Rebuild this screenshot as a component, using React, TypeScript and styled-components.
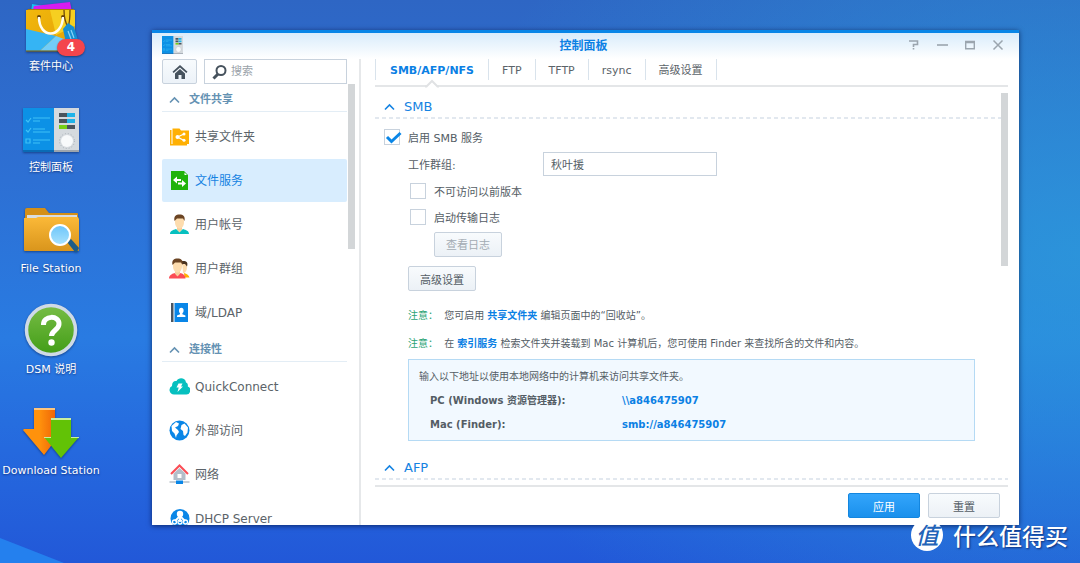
import React from "react";
import styled, { createGlobalStyle } from "styled-components";

const GlobalStyle = createGlobalStyle`
  * { box-sizing: border-box; }
  html, body, #root { height: 100%; }
  body {
    margin: 0;
    overflow: hidden;
    font-family: "DejaVu Sans", "Noto Sans CJK SC", sans-serif;
    font-size: 11px;
    color: #545d65;
  }
  a { color: inherit; text-decoration: none; }
  button, input { font: inherit; color: inherit; }
`;

const Desktop = styled.div`
  position: relative;
  min-height: 100%;
  height: 100vh;
  overflow: hidden;
  background:
    radial-gradient(ellipse 60% 85% at 100% 45%, rgba(44, 160, 218, 0.7), rgba(44, 160, 218, 0) 100%),
    linear-gradient(180deg, #2e66c4 0%, #2d70d4 32%, #297be2 60%, #2569de 80%, #2258d8 100%);
  &::after {
    content: "";
    position: absolute;
    left: 0;
    bottom: 0;
    width: 64px;
    height: 25px;
    background: #2480ee;
    clip-path: polygon(0 0, 100% 100%, 0 100%);
  }
`;

const Shortcuts = styled.nav`
  display: flex;
  flex-direction: column;
  width: 102px;
`;

const Shortcut = styled.a`
  display: flex;
  flex-direction: column;
  align-items: center;
  height: 101px;
  color: #fff;
  line-height: 16px;
  white-space: nowrap;
  text-shadow: 0 1px 2px rgba(0, 20, 80, 0.6);
`;

const ShortcutIcon = styled.span`
  position: relative;
  height: 59px;
  svg { display: block; filter: drop-shadow(0 1px 1px rgba(0, 20, 70, 0.5)); }
`;

const Badge = styled.span`
  position: absolute;
  right: -3px;
  top: 39px;
  width: 28px;
  height: 17px;
  border-radius: 9px;
  background: #f4454c;
  box-shadow: 0 1px 2px rgba(0, 0, 0, 0.4);
  font-size: 12px;
  font-weight: bold;
  line-height: 17px;
  text-align: center;
  text-shadow: none;
`;

const Window = styled.section`
  position: absolute;
  top: 30px;
  right: 61px;
  bottom: 38px;
  left: 152px;
  display: flex;
  flex-direction: column;
  border-top: 3px solid #0986e7;
  background: #fff;
  box-shadow: 0 1px 5px rgba(0, 15, 60, 0.7);
`;

const TitleBar = styled.header`
  display: grid;
  grid-template-columns: 1fr auto 1fr;
  align-items: center;
  flex: none;
  height: 26px;
  padding: 0 14px 0 10px;
  background: linear-gradient(#d9ecfb, #fff);
  svg { display: block; }
  > svg { margin-bottom: 2px; }
`;

const Title = styled.h1`
  margin: 0;
  font-size: 12px;
  line-height: 24px;
  color: #0b80e4;
`;

const WindowControls = styled.div`
  display: flex;
  justify-content: flex-end;
  gap: 14px;
  padding-bottom: 2px;
`;

const ControlButton = styled.button`
  width: 14px;
  height: 14px;
  padding: 0;
  border: 0;
  background: none;
  color: #9ba5ae;
`;

const Body = styled.div`
  display: flex;
  flex: 1;
  min-height: 0;
`;

const Sidebar = styled.aside`
  display: flex;
  flex-direction: column;
  flex: none;
  width: 209px;
  border-right: 2px solid #e6e8ea;
`;

const SearchRow = styled.div`
  display: flex;
  gap: 7px;
  flex: none;
  padding: 0 12px 0 10px;
`;

const HomeButton = styled.button`
  display: grid;
  place-items: center;
  width: 35px;
  height: 25px;
  padding: 0;
  border: 1px solid #c8d2dd;
  border-radius: 2px;
  background: linear-gradient(#f8fbfd, #ecf2f8);
  color: #46525d;
`;

const SearchBox = styled.label`
  display: flex;
  align-items: center;
  gap: 4px;
  width: 143px;
  height: 25px;
  padding-left: 7px;
  border: 1px solid #c8d2dd;
  color: #46525d;
  svg { flex: none; }
`;

const SearchInput = styled.input`
  width: 100%;
  min-width: 0;
  padding: 0;
  border: 0;
  outline: 0;
  background: none;
  &::placeholder { color: #9aa2a9; opacity: 1; }
`;

const SideScroll = styled.div`
  display: flex;
  align-items: flex-start;
  flex: 1;
  min-height: 0;
  overflow: hidden;
  padding-left: 10px;
`;

const SideNav = styled.nav`
  width: 185px;
  padding-top: 1px;
`;

const ScrollThumb = styled.div<{ $height: number }>`
  width: 7px;
  height: ${(p) => p.$height}px;
  margin-left: 1px;
  background: #d3d6d8;
`;

const NavGroup = styled.h2`
  display: flex;
  align-items: center;
  gap: 9px;
  height: 27px;
  margin: 0 0 3px;
  padding: 3px 0 0 7px;
  border-bottom: 1px solid #e3edf5;
  font-size: 11px;
  line-height: 22px;
  color: #6592b3;
`;

const NavItem = styled.a<{ $active?: boolean }>`
  display: flex;
  align-items: center;
  gap: 5px;
  height: 43px;
  margin-bottom: 1px;
  padding-left: 7px;
  border-radius: 2px;
  font-size: 12px;
  line-height: 20px;
  white-space: nowrap;
  background: ${(p) => (p.$active ? "#d8edfe" : "transparent")};
  color: ${(p) => (p.$active ? "#1583e2" : "#5b6369")};
`;

const Main = styled.main`
  display: flex;
  flex-direction: column;
  flex: 1;
  min-width: 0;
  padding: 0 11px 0 14px;
`;

const Tabs = styled.nav`
  display: flex;
  flex: none;
  height: 28px;
  border-bottom: 2px solid #e4e6e8;
`;

const Tab = styled.a<{ $active?: boolean }>`
  position: relative;
  height: 21px;
  padding: 0 ${(p) => (p.$active ? 14 : 13)}px;
  border-right: 1px solid #d9e3ec;
  line-height: 23px;
  white-space: nowrap;
  font-weight: ${(p) => (p.$active ? "bold" : "normal")};
  color: ${(p) => (p.$active ? "#0b80e4" : "#5b6369")};
  &:first-child { border-left: 1px solid #d9e3ec; }
`;

const Notch = styled.svg`
  position: absolute;
  left: 50%;
  top: 20px;
  margin-left: -7px;
`;

const Content = styled.div`
  position: relative;
  flex: 1;
  min-height: 0;
  overflow: hidden;
  padding-top: 6px;
`;

const ContentScroll = styled.div`
  position: absolute;
  top: 6px;
  right: 0;
`;

const SectionTitle = styled.h2`
  display: flex;
  align-items: center;
  gap: 9px;
  height: 26px;
  margin: 0;
  padding: 1px 0 0 9px;
  background: repeating-linear-gradient(90deg, #e2e8ef 0 4px, transparent 4px 7px) bottom / 100% 2px no-repeat;
  font-size: 13px;
  font-weight: normal;
  line-height: 24px;
  color: #1583e2;
`;

const Form = styled.form`
  padding: 5px 33px 13px;
`;

const FormRow = styled.div<{ $height?: number; $indent?: number }>`
  display: flex;
  align-items: center;
  height: ${(p) => p.$height ?? 26}px;
  padding-left: ${(p) => p.$indent ?? 0}px;
`;

const FieldLabel = styled.label`
  width: 135px;
`;

const TextInput = styled.input`
  width: 174px;
  height: 24px;
  padding: 0 7px;
  border: 1px solid #c8d2dd;
  outline: 0;
`;

const CheckLabel = styled.label<{ $outdent?: boolean }>`
  position: relative;
  display: flex;
  align-items: center;
  gap: 8px;
  margin-left: ${(p) => (p.$outdent ? -24 : 2)}px;
  svg { position: absolute; left: 1px; top: 2px; }
`;

const CheckBox = styled.input.attrs({ type: "checkbox" })`
  appearance: none;
  width: 16px;
  height: 16px;
  margin: 0;
  border: 1px solid #c8d2dd;
  background: #fff;
`;

const Button = styled.button<{ $primary?: boolean; $wide?: boolean }>`
  width: ${(p) => (p.$wide ? 72 : 68)}px;
  height: 25px;
  padding: 0;
  border: 1px solid ${(p) => (p.$primary ? "#1386df" : "#c8d2dd")};
  border-radius: 2px;
  background: ${(p) => (p.$primary ? "linear-gradient(#33a5fb, #1a90ec)" : "linear-gradient(#f8fbfd, #ecf1f6)")};
  color: ${(p) => (p.$primary ? "#fff" : "#545d65")};
  &:disabled { color: #a3abb3; }
`;

const Notes = styled.div`
  padding: 3px 0 1px;
`;

const Note = styled.p`
  margin: 0;
  font-size: 10px;
  line-height: 28px;
  white-space: nowrap;
  a { font-weight: bold; color: #0b80e4; }
`;

const NoteTag = styled.span`
  margin-right: 3px;
  color: #29a374;
`;

const AddressBox = styled.div`
  padding: 5px 10px 3px;
  border: 1px solid #b5daf4;
  background: #f2f9ff;
  font-size: 10px;
  line-height: 24px;
  p, dl, dd { margin: 0; }
`;

const AddressList = styled.dl`
  display: grid;
  grid-template-columns: 192px 1fr;
  padding-left: 11px;
  font-weight: bold;
  a { color: #0b80e4; }
`;

const Footer = styled.footer`
  display: flex;
  justify-content: flex-end;
  gap: 8px;
  flex: none;
  height: 40px;
  padding: 6px 8px 0;
  border-top: 2px solid #e4e6e8;
`;

const Watermark = styled.div`
  position: absolute;
  right: 12px;
  bottom: 11px;
  display: flex;
  align-items: center;
  gap: 10px;
  color: #fff;
  font-family: "Noto Sans CJK SC", sans-serif;
  font-size: 23px;
  font-weight: 500;
  line-height: 34px;
  text-shadow: 1px 1px 2px rgba(0, 20, 80, 0.7);
`;

const Seal = styled.span`
  width: 32px;
  height: 32px;
  border-radius: 50%;
  background: #fff;
  color: #2263b8;
  font-style: italic;
  line-height: 31px;
  text-align: center;
  text-shadow: none;
`;

const Chevron = () => (
  <svg width="11" height="8" viewBox="0 0 11 8" fill="none" stroke="currentColor" strokeWidth="1.6">
    <path d="M1 6.5 5.5 2 10 6.5" />
  </svg>
);

const PanelArt = () => (
  <>
    <rect x="0" y="0" width="31" height="43" fill="#0c91e6" />
    <rect x="31" y="0" width="25" height="43" fill="#d5dade" />
    <path d="M0 42h31v2H0z" fill="#0a6bb5" />
    <path d="M31 42h25v2H31z" fill="#9da5ad" />
    <path d="M3 12l2 2 3-4M3 22l2 2 3-4M3 31h4v4H3zM10 10h17M10 13h7M10 21h12M10 24h17M10 32h17M10 35h7" stroke="#3fc1f6" strokeWidth="1.2" fill="none" />
    <path d="M36 5h8v4h-8zM36 11h8v4h-8zM44 17h8v4h-8z" fill="#4a545c" />
    <path d="M44 5h8v4h-8zM44 11h8v4h-8z" fill="#1fb3e8" />
    <path d="M36 17h8v4h-8z" fill="#76d016" />
    <circle cx="44" cy="33" r="7.5" fill="none" stroke="#a9b1b8" strokeWidth="1" strokeDasharray="1 2" />
    <circle cx="44" cy="33" r="6" fill="#f8fafb" />
  </>
);

const PackageIcon = () => (
  <svg width="62" height="58" viewBox="0 0 62 58">
    <defs>
      <linearGradient id="bag" x1="0" y1="0" x2="1" y2="1">
        <stop offset="0" stopColor="#f2b80c" /><stop offset="1" stopColor="#e3a006" />
      </linearGradient>
    </defs>
    <path d="M12 4 42 9 40 13 11 12z" fill="#19c3f0" />
    <path d="M14 6 50 2 52 12 12 12z" fill="#d61bf0" />
    <path d="M8 9h46l1 3H6z" fill="#b07a06" />
    <path d="M6 10h49v41H6z" fill="url(#bag)" />
    <path d="M30 10h25v16L36 35z" fill="#f6cf21" />
    <path d="M6 29 36 36 20 51H6z" fill="#35b4f4" />
    <path d="M20 51 36 36 55 43v8z" fill="#72cdf8" />
    <path d="M6 50h49v2H6z" fill="#7b6a20" opacity=".6" />
    <circle cx="19" cy="17" r="2" fill="#6a4605" /><circle cx="43" cy="17" r="2" fill="#6a4605" />
    <path d="M19 17c0 22 23 22 24 0" fill="none" stroke="#fffdf0" strokeWidth="2.5" />
    <path d="M44 10c0 8 1 12 4 17M50 10c0 8 0 12-2 17" fill="none" stroke="#6e4a0c" strokeWidth="1.3" />
    <path d="M43 29 48 23 54 27 58 40 46 43z" fill="#168fd2" />
    <path d="M48 31l3 8M51 30l3 8" stroke="#8ad4f7" strokeWidth="1.2" />
  </svg>
);

const PanelIcon = () => (
  <svg width="62" height="58" viewBox="0 0 62 58"><g transform="translate(3 7)"><PanelArt /></g></svg>
);

const FolderIcon = () => (
  <svg width="62" height="58" viewBox="0 0 62 58">
    <defs>
      <linearGradient id="folder" x1="0" y1="0" x2="0" y2="1">
        <stop offset="0" stopColor="#fbb938" /><stop offset="1" stopColor="#d9951c" />
      </linearGradient>
      <linearGradient id="lens" x1="0" y1="0" x2="0" y2="1">
        <stop offset="0" stopColor="#6cc5fa" /><stop offset="1" stopColor="#a9e3fd" />
      </linearGradient>
    </defs>
    <path d="M5 8q0-2 2-2h18l4 5h28q1 0 1 1v10H5z" fill="#d48f17" />
    <path d="M7 13h50v5H7z" fill="#d9dde0" />
    <path d="M4 16h12l2-1h40l1 2v31q0 1-1 1H5q-1 0-1-1z" fill="url(#folder)" />
    <path d="M47 40l4-3 8 9-2 4h-2z" fill="#1d5d88" />
    <circle cx="40" cy="33" r="10" fill="url(#lens)" stroke="#fff" strokeWidth="2" />
  </svg>
);

const HelpIcon = () => (
  <svg width="62" height="58" viewBox="0 0 62 58">
    <defs>
      <linearGradient id="help" x1="0" y1="0" x2="0" y2="1">
        <stop offset="0" stopColor="#78bd46" /><stop offset="1" stopColor="#429d17" />
      </linearGradient>
    </defs>
    <circle cx="31" cy="27" r="24.5" fill="url(#help)" stroke="#cfdae6" strokeWidth="3.5" />
    <path d="M23.5 22c-.5-10 16-10 15.500-1 0 6-7.500 6.500-7.500 12" fill="none" stroke="#fff" strokeWidth="5" />
    <circle cx="31.500" cy="39.500" r="3.200" fill="#fff" />
  </svg>
);

const DownloadIcon = () => (
  <svg width="62" height="58" viewBox="0 0 62 58">
    <defs>
      <linearGradient id="orange" x1="0" y1="0" x2="1" y2="0">
        <stop offset="0.400" stopColor="#ff920c" /><stop offset="1" stopColor="#e64d05" />
      </linearGradient>
    </defs>
    <path d="M14 4h21v21h9L24 51 3 26l1-1h10z" fill="url(#orange)" />
    <path d="M14 4h21v2H14z" fill="#ffc67d" />
    <path d="M31 14h20v19h8L41 54 24 33h7z" fill="#62c206" />
    <path d="M31 14h20v2H31zM24 33h7v1h-7zM51 33h8v1h-8z" fill="#c9ef9f" />
  </svg>
);

const navSvg = { width: 21, height: 21, viewBox: "0 0 21 21" };

const SharedFolderGlyph = () => (
  <svg {...navSvg}>
    <path d="M1 4h1.500v14H18v1.500H1zM3.500 2.500h7l1.500 2h8v13.500H3.500z" fill="#ffb003" />
    <path d="M15 8 8.500 11l6.500 3.500" stroke="#fff" strokeWidth="1.200" fill="none" />
    <g fill="#fff"><circle cx="15" cy="8" r="1.500" /><circle cx="8.500" cy="11" r="2" /><circle cx="15" cy="14.300" r="1.500" /></g>
  </svg>
);
const FileServiceGlyph = () => (
  <svg {...navSvg}>
    <path d="M2 1h13l4 4v15H2z" fill="#1fb30b" />
    <path d="M15.500 2.500v2.500H18z" fill="#fff" />
    <path d="M8 6.500v2.500h4v2H8v2.500L4 10zM13 10l4 3.500-4 3.500v-2.500H9v-2h4z" fill="#fff" />
  </svg>
);
const UserGlyph = () => (
  <svg {...navSvg}>
    <path d="M1 20c0-3 3-4 6-5l3.500 3 3.500-3c3 1 6 2 6 5z" fill="#06c0bf" />
    <path d="M8 12h5v3.500l-2.500 3-2.500-3z" fill="#f6cf9a" />
    <path d="M6 4h9v4c0 4-2 6.500-4.500 6.500S6 12 6 8z" fill="#fddcae" />
    <path d="M5.500 7C4.500 2 7 .5 10.500 .5S16.500 2 15.500 7L14 4.500H8z" fill="#6b4423" />
  </svg>
);
const GroupGlyph = () => (
  <svg {...navSvg}>
    <path d="M15 15c3 1 5 2 5.500 4.500h-5z" fill="#ffb003" />
    <path d="M13 4h5v5c0 4-2 6-4 6z" fill="#fddcae" />
    <path d="M13 3c4-.5 6.500 1 5 5.500L16 6h-3z" fill="#4a3320" />
    <path d="M0 20.500c0-3 2.500-4.500 5.500-5.500l3 3 3-3c3 1 5 2.500 5 5.500z" fill="#fb4d55" />
    <path d="M6 12h5v3.500l-2.500 3-2.500-3z" fill="#f6cf9a" />
    <path d="M4 4h9v4c0 4-2 6.500-4.500 6.500S4 12 4 8z" fill="#fddcae" />
    <path d="M3.500 7C2.500 2 5 .5 8.500 .5S14.500 2 13.500 7L12 4.500H6z" fill="#6b4423" />
  </svg>
);
const LdapGlyph = () => (
  <svg {...navSvg}>
    <path d="M2 1h2.500v19H2z" fill="#4a5560" />
    <path d="M5.500 1H19v19H5.500z" fill="#0986e7" />
    <path d="M10 8.500a2.300 2.700 0 1 1 4.600 0c0 1.300-.6 2.300-1.200 2.800v1l3 1.200V15H8v-1.500l3-1.200v-1c-.6-.5-1-1.500-1-2.800z" fill="#fff" />
  </svg>
);
const CloudGlyph = () => (
  <svg {...navSvg}>
    <path d="M5 18.500a4.500 4.500 0 0 1-2-8.500C3 6 5 4.500 7.500 5c2-4 9-3.500 9.500 1.500 2 1 2 2.500 1.800 4a4.200 4.200 0 0 1-2.300 8z" fill="#06c0bf" />
    <path d="M9.500 7.500h4L12 10.500h2L8.500 16l1.200-4.500H7.500z" fill="#fff" />
  </svg>
);
const GlobeGlyph = () => (
  <svg {...navSvg}>
    <circle cx="10.500" cy="10.500" r="10" fill="#0986e7" />
    <path d="M2.500 6 7 2l3 1.500-1 2.500-3 1.500 3 2.500 1 2-2.500 3.500L7 18l-1.500-4.500L3 11zM12.500 5l3-1.500 3.500 4-.5 5L16 16l-1.500-1-.5-4-2.500-2z" fill="#fff" />
  </svg>
);
const NetworkGlyph = () => (
  <svg {...navSvg}>
    <path d="M4.500 9.500l6-5.500 6 5.500V16h-12z" fill="#b3bec9" />
    <path d="M8.500 10h4v4h-4z" fill="#fff" />
    <path d="M2 10 10.500 1.500 19 10" stroke="#fb4d55" strokeWidth="2" fill="none" />
    <path d="M.5 18h20" stroke="#a5b1bd" strokeWidth="1.200" />
    <path d="M7 16.500h7v3.500H7z" fill="#0986e7" />
  </svg>
);
const DhcpGlyph = () => (
  <svg {...navSvg}>
    <circle cx="11" cy="10.500" r="9.500" fill="#0986e7" />
    <circle cx="11" cy="6" r="3.200" fill="#fff" />
    <path d="M11 6v8M11 8l-5 5M11 8l5 5" stroke="#fff" strokeWidth="1.800" />
    <g fill="none" stroke="#fff" strokeWidth="1.300"><circle cx="5.500" cy="14" r="2" /><circle cx="11" cy="14" r="2" /><circle cx="16.500" cy="14" r="2" /></g>
  </svg>
);

const shortcuts = [
  { label: "套件中心", Icon: PackageIcon, badge: "4" },
  { label: "控制面板", Icon: PanelIcon },
  { label: "File Station", Icon: FolderIcon },
  { label: "DSM 说明", Icon: HelpIcon },
  { label: "Download Station", Icon: DownloadIcon },
];

const groups = [
  {
    title: "文件共享",
    items: [
      { label: "共享文件夹", Icon: SharedFolderGlyph },
      { label: "文件服务", Icon: FileServiceGlyph, active: true },
      { label: "用户帐号", Icon: UserGlyph },
      { label: "用户群组", Icon: GroupGlyph },
      { label: "域/LDAP", Icon: LdapGlyph },
    ],
  },
  {
    title: "连接性",
    items: [
      { label: "QuickConnect", Icon: CloudGlyph },
      { label: "外部访问", Icon: GlobeGlyph },
      { label: "网络", Icon: NetworkGlyph },
      { label: "DHCP Server", Icon: DhcpGlyph },
    ],
  },
];

const controls = [
  { label: "帮助", art: <path d="M2 3h8.500v3.500H6.500V9M6.500 10v1.500" strokeWidth="1.600" /> },
  { label: "最小化", art: <path d="M2 7h11" strokeWidth="1.600" /> },
  { label: "最大化", art: <path d="M2.700 3.500h8.600v7.300H2.700zM2 3.500h10M2 4.500h10" strokeWidth="1.400" /> },
  { label: "关闭", art: <path d="M2.500 2.500l9 9M11.500 2.500l-9 9" strokeWidth="1.500" /> },
];

const tabs = ["SMB/AFP/NFS", "FTP", "TFTP", "rsync", "高级设置"];

export default function App() {
  return (
    <>
      <GlobalStyle />
      <Desktop lang="zh-CN">
        <Shortcuts>
          {shortcuts.map(({ label, Icon, badge }) => (
            <Shortcut href="#" key={label}>
              <ShortcutIcon>
                <Icon />
                {badge && <Badge>{badge}</Badge>}
              </ShortcutIcon>
              {label}
            </Shortcut>
          ))}
        </Shortcuts>

        <Window>
          <TitleBar>
            <svg width="21" height="18" viewBox="0 0 56 44" preserveAspectRatio="none"><PanelArt /></svg>
            <Title>控制面板</Title>
            <WindowControls>
              {controls.map((c) => (
                <ControlButton key={c.label} aria-label={c.label}>
                  <svg width="14" height="14" viewBox="0 0 14 14" fill="none" stroke="currentColor">{c.art}</svg>
                </ControlButton>
              ))}
            </WindowControls>
          </TitleBar>

          <Body>
            <Sidebar>
              <SearchRow>
                <HomeButton aria-label="主页">
                  <svg width="16" height="16" viewBox="0 0 16 16" fill="currentColor">
                    <path d="M8 1l7.500 6.800-1.200 1.300L8 3.500 1.700 9.100.5 7.800z" />
                    <path d="M8 5l5 4.500V15H9.500v-4h-3v4H3V9.500z" />
                  </svg>
                </HomeButton>
                <SearchBox>
                  <svg width="15" height="16" viewBox="0 0 15 16" fill="none" stroke="currentColor" strokeWidth="2">
                    <circle cx="9" cy="6.500" r="4.500" />
                    <path d="M6 10 1.500 14.500" strokeWidth="3" />
                  </svg>
                  <SearchInput placeholder="搜索" aria-label="搜索" />
                </SearchBox>
              </SearchRow>
              <SideScroll>
                <SideNav>
                  {groups.map((g) => (
                    <React.Fragment key={g.title}>
                      <NavGroup><Chevron />{g.title}</NavGroup>
                      {g.items.map(({ label, Icon, active }: { label: string; Icon: React.FC; active?: boolean }) => (
                        <NavItem href="#" key={label} $active={active}><Icon />{label}</NavItem>
                      ))}
                    </React.Fragment>
                  ))}
                </SideNav>
                <ScrollThumb $height={165} />
              </SideScroll>
            </Sidebar>

            <Main>
              <Tabs>
                {tabs.map((t, i) => (
                  <Tab href="#" key={t} $active={i === 0}>
                    {t}
                    {i === 0 && (
                      <Notch width="14" height="9" viewBox="0 0 14 9">
                        <path d="M1 8 7 2l6 6v1H1z" fill="#fff" />
                        <path d="M0 7.500h1.500L7 2l5.500 5.500H14" fill="none" stroke="#e0e2e4" strokeWidth="2" />
                      </Notch>
                    )}
                  </Tab>
                ))}
              </Tabs>

              <Content>
                <SectionTitle><Chevron />SMB</SectionTitle>
                <Form onSubmit={(e) => e.preventDefault()}>
                  <FormRow>
                    <CheckLabel $outdent>
                      <CheckBox defaultChecked />
                      <svg width="17" height="13" viewBox="0 0 17 13" fill="none" stroke="#0986e7" strokeWidth="3">
                        <path d="M2 6l4.500 4.500L15.500 2" />
                      </svg>
                      启用 SMB 服务
                    </CheckLabel>
                  </FormRow>
                  <FormRow $height={28}>
                    <FieldLabel htmlFor="workgroup">工作群组:</FieldLabel>
                    <TextInput id="workgroup" defaultValue="秋叶援" />
                  </FormRow>
                  <FormRow><CheckLabel><CheckBox />不可访问以前版本</CheckLabel></FormRow>
                  <FormRow><CheckLabel><CheckBox />启动传输日志</CheckLabel></FormRow>
                  <FormRow $height={28} $indent={26}><Button type="button" disabled>查看日志</Button></FormRow>
                  <FormRow $height={41}><Button type="button">高级设置</Button></FormRow>
                  <Notes>
                    <Note><NoteTag>注意：</NoteTag> 您可启用 <a href="#">共享文件夹</a> 编辑页面中的“回收站”。</Note>
                    <Note><NoteTag>注意：</NoteTag> 在 <a href="#">索引服务</a> 检索文件夹并装载到 Mac 计算机后，您可使用 Finder 来查找所含的文件和内容。</Note>
                  </Notes>
                  <AddressBox>
                    <p>输入以下地址以使用本地网络中的计算机来访问共享文件夹。</p>
                    <AddressList>
                      <dt>PC (Windows 资源管理器):</dt>
                      <dd><a href="#">\\a846475907</a></dd>
                      <dt>Mac (Finder):</dt>
                      <dd><a href="#">smb://a846475907</a></dd>
                    </AddressList>
                  </AddressBox>
                </Form>
                <SectionTitle><Chevron />AFP</SectionTitle>
                <ContentScroll><ScrollThumb $height={173} /></ContentScroll>
              </Content>

              <Footer>
                <Button type="button" $primary $wide>应用</Button>
                <Button type="button" $wide>重置</Button>
              </Footer>
            </Main>
          </Body>
        </Window>

        <Watermark><Seal>值</Seal>什么值得买</Watermark>
      </Desktop>
    </>
  );
}
